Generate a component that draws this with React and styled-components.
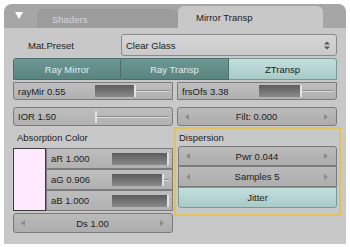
import React from "react";
import styled, { createGlobalStyle } from "styled-components";

const GlobalStyle = createGlobalStyle`
  html, body {
    margin: 0;
    padding: 0;
    background: #ffffff;
  }
  body {
    font-family: "Liberation Sans", Arial, sans-serif;
    font-size: 9.5px;
    color: #1c1c1c;
  }
  * { box-sizing: border-box; }
`;

const Panel = styled.div`
  margin: 4px 0 0 4px;
  width: 342px;
  height: 240px;
  background: #c8c8c8;
  border-radius: 8px 8px 0 0;
  display: flex;
  flex-direction: column;
  overflow: hidden;
`;

const Header = styled.div`
  height: 24px;
  flex-shrink: 0;
  background: #a6a6a6;
  display: flex;
  align-items: flex-end;
  padding-left: 11px;
`;

const Collapse = styled.svg`
  align-self: flex-start;
  margin-top: 8px;
  margin-right: 14px;
`;

const Tab = styled.div`
  display: flex;
  align-items: center;
  height: ${(p) => (p.$active ? 22 : 19)}px;
  width: ${(p) => (p.$active ? 145 : 141)}px;
  padding-left: ${(p) => (p.$active ? 18 : 15)}px;
  padding-top: 1px;
  background: ${(p) => (p.$active ? "#c8c8c8" : "#9c9c9c")};
  color: ${(p) => (p.$active ? "#1c1c1c" : "#d6d6d6")};
  border-radius: 6px 6px 0 0;
`;

const Body = styled.div`
  padding: 6px 9px 0 9px;
  display: flex;
  flex-direction: column;
`;

const PresetRow = styled.div`
  display: flex;
  align-items: center;
  height: 22px;
`;

const RowLabel = styled.div`
  width: 108px;
  padding-left: 15px;
`;

const Select = styled.div`
  flex: 1;
  height: 22px;
  display: flex;
  align-items: center;
  justify-content: space-between;
  padding: 0 6px 0 4px;
  background: linear-gradient(#d6d6d6, #c9c9c9);
  border: 1px solid #8a8a8a;
  border-radius: 3px;
`;

const ToggleRow = styled.div`
  margin-top: 2px;
  display: grid;
  grid-template-columns: repeat(3, 1fr);
  height: 22px;
`;

const Toggle = styled.div`
  display: flex;
  align-items: center;
  justify-content: center;
  height: ${(p) => p.$h || 22}px;
  border: 1px solid ${(p) => (p.$on ? "#7a9996" : "#4d6f6c")};
  border-left-width: ${(p) => (p.$first ? 1 : 0)}px;
  border-radius: ${(p) => p.$radius || "0"};
  background: ${(p) =>
    p.$on
      ? "linear-gradient(#c3dfdc, #a8cbc7)"
      : "linear-gradient(#6b9894, #5a8480)"};
  color: ${(p) => (p.$on ? "#1c1c1c" : "#e2ecec")};
`;

const Pair = styled.div`
  display: grid;
  grid-template-columns: 1fr 1fr;
  column-gap: 4px;
  margin-top: ${(p) => p.$top || 0}px;
`;

const Column = styled.div`
  display: flex;
  flex-direction: column;
`;

const SliderField = styled.div`
  display: flex;
  align-items: center;
  height: ${(p) => p.$h || 18}px;
  padding-left: 4px;
  background: linear-gradient(#bebebe, #b1b1b1);
  border: 1px solid #7c7c7c;
  border-radius: ${(p) => p.$radius || "3px"};
  margin-top: ${(p) => p.$top || 0}px;
`;

const SliderLabel = styled.span`
  flex: 0 0 50%;
  white-space: nowrap;
`;

const Track = styled.div`
  flex: 1;
  height: 12px;
  margin-right: 3px;
  display: flex;
  background: linear-gradient(
    transparent 5px,
    #8e8e8e 5px,
    #8e8e8e 6px,
    #dcdcdc 6px,
    #dcdcdc 7px,
    transparent 7px
  );
`;

const Fill = styled.div`
  height: 100%;
  background: linear-gradient(#5c5c5c, #8a8a8a);
  border-right: 2px solid #e2e2e2;
`;

const NumField = styled.div`
  display: flex;
  align-items: center;
  justify-content: space-between;
  height: ${(p) => p.$h || 19}px;
  padding: 0 8px 0 7px;
  background: linear-gradient(#bababa, #adadad);
  border: 1px solid #7a7a7a;
  border-radius: ${(p) => p.$radius || "3px"};
  margin-top: ${(p) => p.$top || 0}px;
`;

const Arrow = styled.span`
  width: 0;
  height: 0;
  border-top: 3px solid transparent;
  border-bottom: 3px solid transparent;
  ${(p) =>
    p.$dir === "left"
      ? "border-right: 4px solid #8a8a8a;"
      : "border-left: 4px solid #8a8a8a;"}
`;

const SectionLabel = styled.div`
  height: ${(p) => p.$h}px;
  display: flex;
  align-items: center;
  padding-left: ${(p) => p.$pad || 4}px;
`;

const ColorGroup = styled.div`
  display: flex;
  height: 63px;
`;

const Swatch = styled.div`
  width: 33px;
  background: #ffe9ff;
  border: 1px solid #3c3c3c;
`;

const Stack = styled.div`
  flex: 1;
  display: flex;
  flex-direction: column;
`;

const Dispersion = styled.div`
  margin: 1px -4px 0 -3px;
  height: 89px;
  border: 2px solid #e2c35a;
  padding: 0 2px 0 2px;
  display: flex;
  flex-direction: column;
`;

function Slider({ label, value, h, radius, top }) {
  return (
    <SliderField $h={h} $radius={radius} $top={top}>
      <SliderLabel>{label}</SliderLabel>
      <Track>
        <Fill style={{ width: `${value * 100}%` }} />
      </Track>
    </SliderField>
  );
}

function Num({ children, h, radius, top }) {
  return (
    <NumField $h={h} $radius={radius} $top={top}>
      <Arrow $dir="left" />
      <span>{children}</span>
      <Arrow $dir="right" />
    </NumField>
  );
}

export default function App() {
  return (
    <>
      <GlobalStyle />
      <Panel>
        <Header>
          <Collapse width="8" height="7" viewBox="0 0 8 7">
            <path d="M0 0 H8 L4 7 Z" fill="#ffffff" />
          </Collapse>
          <Tab>Shaders</Tab>
          <Tab $active>Mirror Transp</Tab>
        </Header>
        <Body>
          <PresetRow>
            <RowLabel>Mat.Preset</RowLabel>
            <Select>
              <span>Clear Glass</span>
              <svg width="6" height="9" viewBox="0 0 6 9">
                <path d="M0 3.5 L3 0.5 L6 3.5 Z" fill="#555" />
                <path d="M0 5.5 L3 8.5 L6 5.5 Z" fill="#555" />
              </svg>
            </Select>
          </PresetRow>
          <ToggleRow>
            <Toggle $first $radius="3px 0 0 0">Ray Mirror</Toggle>
            <Toggle>Ray Transp</Toggle>
            <Toggle $on $radius="0 3px 0 0">ZTransp</Toggle>
          </ToggleRow>
          <Pair $top={2}>
            <Slider label="rayMir 0.55" value={0.55} radius="0 0 0 3px" />
            <Slider label="frsOfs 3.38" value={0.58} radius="0 0 3px 0" />
          </Pair>
          <Pair $top={7}>
            <Column>
              <Slider label="IOR 1.50" value={0.03} h={19} />
              <SectionLabel $h={22}>Absorption Color</SectionLabel>
              <ColorGroup>
                <Swatch />
                <Stack>
                  <Slider label="aR 1.000" value={1} h={21} radius="0" />
                  <Slider label="aG 0.906" value={0.906} h={21} radius="0" />
                  <Slider label="aB 1.000" value={1} h={21} radius="0" />
                </Stack>
              </ColorGroup>
              <Num h={20} top={2}>Ds 1.00</Num>
            </Column>
            <Column>
              <Num>Filt: 0.000</Num>
              <Dispersion>
                <SectionLabel $h={17} $pad={1}>Dispersion</SectionLabel>
                <Num h={20} radius="3px 3px 0 0">Pwr 0.044</Num>
                <Num h={21} radius="0">Samples 5</Num>
                <Toggle $on $first $h={21} $radius="0 0 3px 3px">
                  Jitter
                </Toggle>
              </Dispersion>
            </Column>
          </Pair>
        </Body>
      </Panel>
    </>
  );
}
